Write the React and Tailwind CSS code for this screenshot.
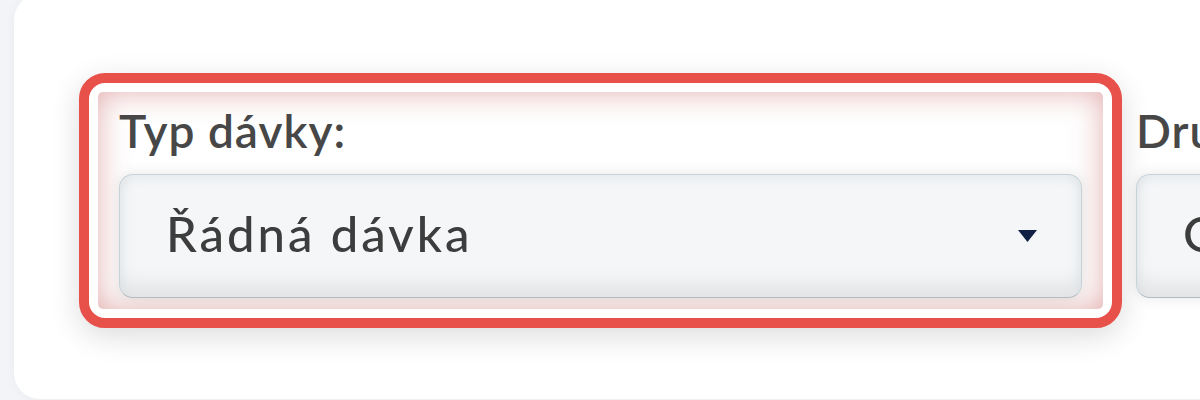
import React from 'react';

function Caret() {
  return (
    <svg width="19" height="12" viewBox="0 0 19 12" className="shrink-0">
      <path d="M0 0 H19 L9.5 12 Z" fill="#0f2044" />
    </svg>
  );
}

function Field({ label, value, highlighted }) {
  return (
    <div className="relative w-[963px] shrink-0">
      {highlighted && (
        <div className="absolute -left-[40px] -right-[40px] -top-[30px] -bottom-[30px] rounded-[26px] border-[10px] border-[#e8504a] bg-white p-[9px] shadow-[0_8px_30px_rgba(0,0,0,0.14)]">
          <div className="h-full rounded-[5px] shadow-[inset_0_0_30px_rgba(200,96,96,0.5)]" />
        </div>
      )}
      <div className="relative">
        <label className="block text-[46px] font-semibold leading-[55px] tracking-[1px] text-[#474747]">{label}</label>
        <div className="mt-[16px] flex h-[124px] items-center justify-between rounded-[14px] border-[1.5px] border-[#c6d3d8] border-b-[#b3bac0] bg-[#f4f6f8] pl-[46px] pr-[44px] shadow-[0_0_14px_rgba(0,0,0,0.1),inset_0_6px_8px_rgba(120,140,150,0.08),inset_0_-14px_18px_rgba(0,0,0,0.07)]">
          <span className="pb-[6px] text-[49px] font-medium leading-none tracking-[3px] text-[#3d3d3d]">{value}</span>
          <Caret />
        </div>
      </div>
    </div>
  );
}

export default function App() {
  return (
    <div className="h-screen overflow-hidden bg-[#f3f4f7] pl-[14px] font-['Lato',sans-serif]">
      <div className="-mt-[6px] h-[405px] rounded-l-[26px] bg-white pl-[105px] pt-[109px] shadow-[0_0_12px_rgba(0,0,0,0.04)]">
        <div className="flex gap-[54px]">
          <Field label="Typ dávky:" value="Řádná dávka" highlighted />
          <Field label="Druh dávky:" value="Opravná dávka" />
        </div>
      </div>
    </div>
  );
}
